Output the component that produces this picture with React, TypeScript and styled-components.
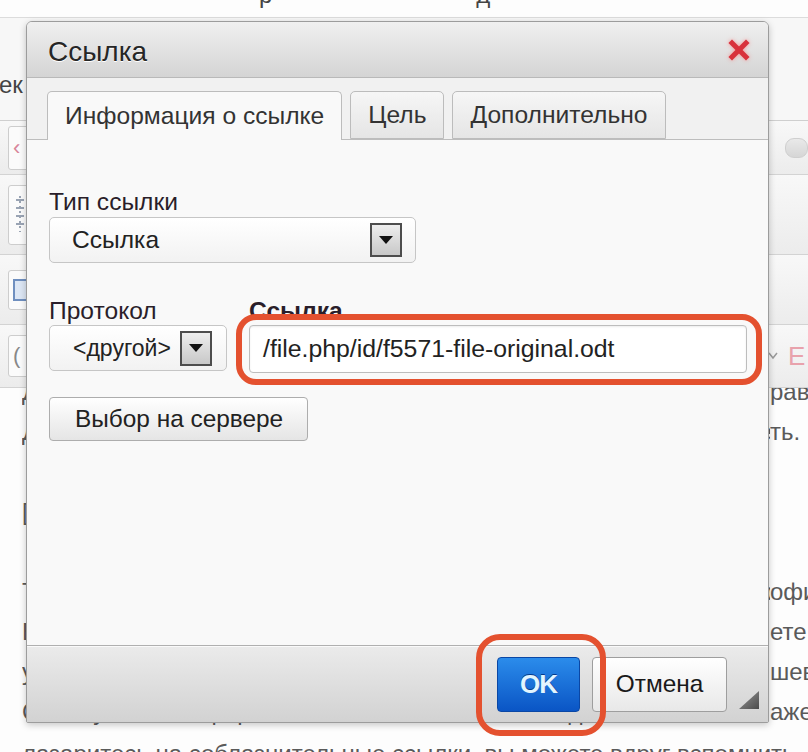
import React from "react";
import styled, { createGlobalStyle } from "styled-components";

const Global = createGlobalStyle`
  html, body { margin: 0; padding: 0; background: #fcfcfc; }
  body { font-family: "Liberation Sans", Arial, sans-serif; }
  #root { width: 808px; height: 752px; }
`;

const Page = styled.div`
  position: relative;
  width: 808px;
  height: 752px;
  overflow: hidden;
  display: flex;
  flex-direction: column;
  background: #fcfcfc;
  font-family: "Liberation Sans", Arial, sans-serif;
  color: #555;
`;

/* ---------- background page ---------- */
const TopStrip = styled.div`
  height: 17px;
  flex: none;
  overflow: hidden;
  border-bottom: 1px solid #dcdcdc;
  background: #fdfdfd;
`;
const TopText = styled.div`
  display: flex;
  gap: 204px;
  padding-left: 259px;
  margin-top: -19px;
  font-size: 24px;
  line-height: 28px;
  color: #444;
`;
const Heading = styled.div`
  height: 102px;
  flex: none;
  box-sizing: border-box;
  padding-top: 53px;
  background: #f7f7f7;
  font-size: 24px;
  line-height: 28px;
  color: #444;
  span { margin-left: -1px; }
`;
const Toolbar = styled.div`
  flex: none;
  border-top: 1px solid #cfcfcf;
  display: flex;
  flex-direction: column;
`;
const ToolRow = styled.div<{ $h: number }>`
  height: ${(p) => p.$h}px;
  box-sizing: border-box;
  border-bottom: 1px solid #d3d3d3;
  background: linear-gradient(#f8f8f8, #ececec);
  display: flex;
  align-items: center;
  justify-content: space-between;
`;
const ToolLeft = styled.div`
  width: 40px;
  padding-left: 8px;
  display: flex;
  align-items: center;
`;
const ToolBox = styled.div<{ $h: number; $tone?: string }>`
  width: 36px;
  height: ${(p) => p.$h}px;
  box-sizing: border-box;
  border: 1px solid #cdcdcd;
  border-radius: 3px;
  background: #fbfbfb;
  display: flex;
  align-items: center;
  padding-left: 4px;
  font-size: 22px;
  color: ${(p) => p.$tone ?? "#d8859a"};
`;
const ToolRight = styled.div`
  width: 40px;
  display: flex;
  align-items: center;
  gap: 10px;
  font-size: 26px;
  color: #e8a2ac;
`;
const Pill = styled.div`
  width: 34px;
  height: 18px;
  margin-left: 17px;
  border-radius: 9px;
  border: 1px solid #cfcfcf;
  background: linear-gradient(#e9e9e9, #d6d6d6);
`;
const Content = styled.div`
  flex: 1;
  overflow: hidden;
  background: #fdfdfd;
  display: flex;
  flex-direction: column;
  > :first-child { margin-top: -16px; }
  > :last-child { margin-top: 2px; }
`;
const TextLine = styled.div`
  height: 40px;
  flex: none;
  display: flex;
  justify-content: space-between;
  padding-left: 22px;
  font-size: 24px;
  line-height: 40px;
  color: #5a5a5a;
  white-space: nowrap;
`;
const LineLeft = styled.span`
  flex: 1;
  min-width: 0;
  overflow: hidden;
`;
const LineRight = styled.span`
  width: 38px;
  flex: none;
`;

/* ---------- dialog ---------- */
const Dialog = styled.div`
  position: absolute;
  left: 26px;
  top: 21px;
  width: 743px;
  height: 702px;
  box-sizing: border-box;
  display: flex;
  flex-direction: column;
  border: 1px solid #9c9c9c;
  border-radius: 6px 6px 2px 2px;
  background: #f9f9f9;
  box-shadow: 0 2px 7px rgba(0, 0, 0, 0.22);
  color: #222;
`;
const TitleBar = styled.div`
  height: 56px;
  flex: none;
  box-sizing: border-box;
  padding: 4px 18px 0 21px;
  display: flex;
  align-items: center;
  justify-content: space-between;
  border-bottom: 1px solid #b9b9b9;
  border-radius: 5px 5px 0 0;
  background: linear-gradient(#f0f0f0, #d4d4d4);
`;
const Title = styled.div`
  font-size: 28px;
  color: #262626;
  text-shadow: 0 1px 0 #fff;
`;
const Close = styled.div`
  width: 22px;
  height: 22px;
  margin-top: -4px;
  display: flex;
  filter: drop-shadow(0 0 2px rgba(255, 120, 120, 0.7));
`;
const TabStrip = styled.div`
  height: 62px;
  flex: none;
  box-sizing: border-box;
  padding: 13px 0 0 20px;
  display: flex;
  align-items: flex-end;
  gap: 8px;
  background: #f1f1f1;
  border-bottom: 1px solid #bdbdbd;
`;
const Tab = styled.div<{ $active?: boolean }>`
  height: ${(p) => (p.$active ? 49 : 48)}px;
  margin-bottom: ${(p) => (p.$active ? -1 : 0)}px;
  box-sizing: border-box;
  padding: 0 17px;
  display: flex;
  align-items: center;
  border: 1px solid #bcbcbc;
  border-bottom: ${(p) => (p.$active ? "none" : "1px solid #bcbcbc")};
  border-radius: 5px 5px 0 0;
  background: ${(p) => (p.$active ? "#f9f9f9" : "linear-gradient(#f6f6f6, #e5e5e5)")};
  font-size: 24.6px;
  color: #333;
`;
const Body = styled.div`
  flex: 1;
  box-sizing: border-box;
  padding: 48px 22px 0;
  display: flex;
  flex-direction: column;
  align-items: flex-start;
`;
const Label = styled.div<{ $bold?: boolean }>`
  font-size: 24.6px;
  line-height: 28px;
  font-weight: ${(p) => (p.$bold ? 700 : 400)};
  color: #2a1e2a;
`;
const Group = styled.div`
  display: flex;
  flex-direction: column;
`;
const SelectBox = styled.div<{ $w: number; $pl: number; $pr: number; $mt?: number; $fs?: number }>`
  width: ${(p) => p.$w}px;
  height: 46px;
  margin-top: ${(p) => p.$mt ?? 0}px;
  box-sizing: border-box;
  padding: 0 ${(p) => p.$pr}px 0 ${(p) => p.$pl}px;
  display: flex;
  align-items: center;
  justify-content: space-between;
  border: 1px solid #c6c6c6;
  border-radius: 5px;
  background: linear-gradient(#ffffff, #f2f2f2);
  font-size: ${(p) => p.$fs ?? 24.6}px;
  color: #222;
`;
const ArrowBox = styled.div<{ $h: number }>`
  width: 32px;
  height: ${(p) => p.$h}px;
  box-sizing: border-box;
  border: 2px solid #4d4d4d;
  background: linear-gradient(#ededed, #c8c8c8);
  display: flex;
  align-items: center;
  justify-content: center;
`;
const Row = styled.div`
  display: grid;
  grid-template-columns: 178px 498px;
  column-gap: 22px;
  margin-top: 34px;
`;
const UrlWrap = styled.div`
  position: relative;
  width: 498px;
`;
const UrlInput = styled.div`
  height: 48px;
  box-sizing: border-box;
  padding-left: 13px;
  display: flex;
  align-items: center;
  border: 1px solid #bdbdbd;
  border-radius: 4px;
  background: #fff;
  box-shadow: inset 0 1px 2px rgba(0, 0, 0, 0.08);
  font-size: 24.8px;
  color: #222;
`;
const Ring = styled.div<{ $l: number; $r: number; $t: number; $b: number; $rad: number }>`
  position: absolute;
  left: ${(p) => -p.$l}px;
  right: ${(p) => -p.$r}px;
  top: ${(p) => -p.$t}px;
  bottom: ${(p) => -p.$b}px;
  border: 6px solid #e4512f;
  border-radius: ${(p) => p.$rad}px;
  pointer-events: none;
  z-index: 3;
`;
const Button = styled.div`
  height: 44px;
  margin-top: 24px;
  box-sizing: border-box;
  padding: 0 24px 0 25px;
  display: flex;
  align-items: center;
  border: 1px solid #adadad;
  border-radius: 4px;
  background: linear-gradient(#ffffff, #e5e5e5);
  font-size: 24.4px;
  color: #222;
`;
const Footer = styled.div`
  height: 77px;
  flex: none;
  position: relative;
  box-sizing: border-box;
  padding-right: 41px;
  display: flex;
  align-items: center;
  justify-content: flex-end;
  gap: 12px;
  border-top: 1px solid #b0b0b0;
  box-shadow: inset 0 1px 0 #fafafa;
  background: linear-gradient(#ebebeb, #d2d2d2);
`;
const OkWrap = styled.div`
  position: relative;
  display: flex;
`;
const OkButton = styled.div`
  width: 83px;
  height: 55px;
  box-sizing: border-box;
  display: flex;
  align-items: center;
  justify-content: center;
  border: 1px solid #0a47a5;
  border-radius: 4px;
  background: linear-gradient(#2b8ceb, #0a55c5);
  font-size: 26px;
  font-weight: 700;
  letter-spacing: -1px;
  color: #e2f5ff;
  text-shadow: 0 -1px 0 #063a8a;
`;
const CancelButton = styled.div`
  width: 135px;
  height: 55px;
  box-sizing: border-box;
  display: flex;
  align-items: center;
  justify-content: center;
  border: 1px solid #9e9e9e;
  border-radius: 4px;
  background: linear-gradient(#ffffff, #e8e8e8);
  font-size: 24.4px;
  color: #1a1a1a;
`;
const Grip = styled.div`
  position: absolute;
  right: 9px;
  bottom: 13px;
  width: 20px;
  height: 18px;
  display: flex;
`;

const Tri = () => (
  <svg width="14" height="8" viewBox="0 0 14 8">
    <polygon points="0,0 14,0 7,8" fill="#111" />
  </svg>
);

export default function App() {
  return (
    <>
      <Global />
      <Page>
        <TopStrip>
          <TopText>
            <span>р</span>
            <span>д</span>
          </TopText>
        </TopStrip>
        <Heading>
          <span>ек</span>
        </Heading>
        <Toolbar>
          <ToolRow $h={54}>
            <ToolLeft>
              <ToolBox $h={44}>‹</ToolBox>
            </ToolLeft>
            <ToolRight>
              <Pill />
            </ToolRight>
          </ToolRow>
          <ToolRow $h={80}>
            <ToolLeft>
              <ToolBox $h={60}>
                <svg width="14" height="46" viewBox="0 0 14 46">
                  <g stroke="#9aa4b4" strokeWidth="2">
                    <line x1="3" y1="8" x2="11" y2="8" />
                    <line x1="3" y1="16" x2="11" y2="16" />
                    <line x1="3" y1="24" x2="11" y2="24" />
                    <line x1="3" y1="32" x2="11" y2="32" />
                    <line x1="7" y1="4" x2="7" y2="40" strokeDasharray="2 3" />
                  </g>
                </svg>
              </ToolBox>
            </ToolLeft>
            <ToolRight />
          </ToolRow>
          <ToolRow $h={70}>
            <ToolLeft>
              <ToolBox $h={40}>
                <svg width="18" height="22" viewBox="0 0 18 22">
                  <rect x="1" y="1" width="16" height="20" fill="#dce6f4" stroke="#6f8fbf" strokeWidth="2" />
                </svg>
              </ToolBox>
            </ToolLeft>
            <ToolRight />
          </ToolRow>
          <ToolRow $h={63}>
            <ToolLeft>
              <ToolBox $h={42} $tone="#888">(</ToolBox>
            </ToolLeft>
            <ToolRight>
              <svg width="10" height="8" viewBox="0 0 10 8">
                <polyline points="1,1 5,6 9,1" fill="none" stroke="#999" strokeWidth="1.5" />
              </svg>
              <span>Е</span>
            </ToolRight>
          </ToolRow>
        </Toolbar>
        <Content>
          <TextLine>
            <LineLeft>Для того чтобы вставить ссылку, откройте окно и вы</LineLeft>
            <LineRight>рав</LineRight>
          </TextLine>
          <TextLine>
            <LineLeft>Далее нужно указать адрес и сохранить изменения, это можно сдела</LineLeft>
            <LineRight>ть.</LineRight>
          </TextLine>
          <TextLine>
            <LineLeft> </LineLeft>
            <LineRight> </LineRight>
          </TextLine>
          <TextLine>
            <LineLeft>[</LineLeft>
            <LineRight> </LineRight>
          </TextLine>
          <TextLine>
            <LineLeft> </LineLeft>
            <LineRight> </LineRight>
          </TextLine>
          <TextLine>
            <LineLeft>Так вы получите ссылку на файл, который хранится на сервере оф</LineLeft>
            <LineRight>офи</LineRight>
          </TextLine>
          <TextLine>
            <LineLeft>Если вы скопируете адрес из браузера, то увид</LineLeft>
            <LineRight>ете</LineRight>
          </TextLine>
          <TextLine>
            <LineLeft>у всех ссылок одинаковый вид, и это не вредит ни дизайну, ни гла</LineLeft>
            <LineRight>шев</LineRight>
          </TextLine>
          <TextLine>
            <LineLeft>Ссылку можно оформить и в тексте, и в меню, и даже</LineLeft>
            <LineRight>аже</LineRight>
          </TextLine>
          <TextLine>
            <LineLeft>лазаритесь на соблазнительные ссылки, вы можете вдруг вспомнить</LineLeft>
          </TextLine>
        </Content>

        <Dialog>
          <TitleBar>
            <Title>Ссылка</Title>
            <Close>
              <svg width="22" height="22" viewBox="0 0 22 22">
                <g stroke="#d8323c" strokeWidth="5" strokeLinecap="square">
                  <line x1="4" y1="4" x2="18" y2="18" />
                  <line x1="18" y1="4" x2="4" y2="18" />
                </g>
              </svg>
            </Close>
          </TitleBar>
          <TabStrip>
            <Tab $active>Информация о ссылке</Tab>
            <Tab>Цель</Tab>
            <Tab>Дополнительно</Tab>
          </TabStrip>
          <Body>
            <Group>
              <Label>Тип ссылки</Label>
              <SelectBox $w={367} $pl={22} $pr={13} $mt={1}>
                <span>Ссылка</span>
                <ArrowBox $h={34}>
                  <Tri />
                </ArrowBox>
              </SelectBox>
            </Group>
            <Row>
              <Group>
                <Label>Протокол</Label>
                <SelectBox $w={178} $pl={23} $pr={14} $fs={23}>
                  <span>&lt;другой&gt;</span>
                  <ArrowBox $h={35}>
                    <Tri />
                  </ArrowBox>
                </SelectBox>
              </Group>
              <Group>
                <Label $bold>Ссылка</Label>
                <UrlWrap>
                  <UrlInput>/file.php/id/f5571-file-original.odt</UrlInput>
                  <Ring $l={13} $r={15} $t={11} $b={12} $rad={20} />
                </UrlWrap>
              </Group>
            </Row>
            <Button>Выбор на сервере</Button>
          </Body>
          <Footer>
            <OkWrap>
              <OkButton>OK</OkButton>
              <Ring $l={21} $r={26} $t={23} $b={24} $rad={24} />
            </OkWrap>
            <CancelButton>Отмена</CancelButton>
            <Grip>
              <svg width="20" height="18" viewBox="0 0 20 18">
                <defs>
                  <linearGradient id="gg" x1="0" y1="0" x2="1" y2="1">
                    <stop offset="0" stopColor="#9a9a9a" />
                    <stop offset="1" stopColor="#4a4a4a" />
                  </linearGradient>
                </defs>
                <polygon points="20,0 20,18 0,18" fill="url(#gg)" />
              </svg>
            </Grip>
          </Footer>
        </Dialog>
      </Page>
    </>
  );
}
